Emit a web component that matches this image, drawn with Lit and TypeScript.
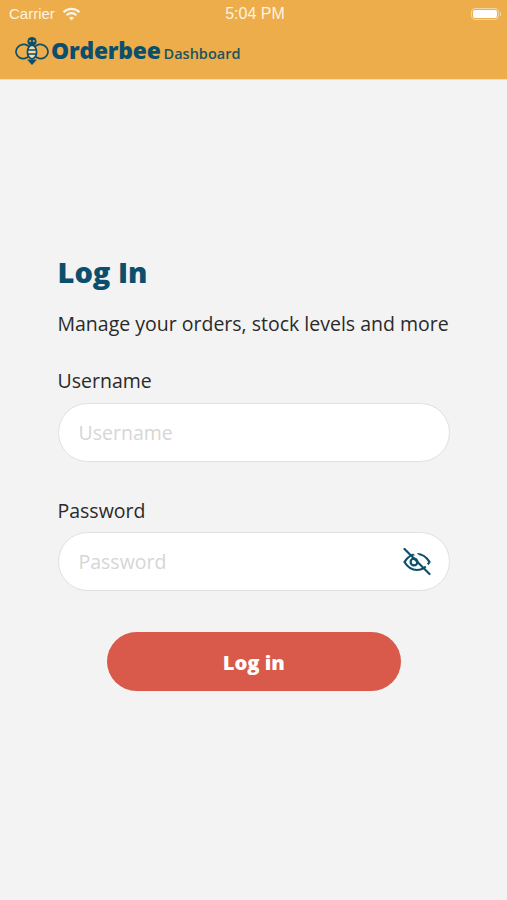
import { LitElement, html, css } from "lit";
import { customElement } from "lit/decorators.js";

@customElement("app-root")
export class AppRoot extends LitElement {
  static styles = css`
    :host {
      display: block;
      height: 900px;
      background: #f3f3f3;
      font-family: "Open Sans", sans-serif;
      color: #2a2a2a;
      overflow: hidden;
    }

    .header {
      background: #edad4b;
      height: 80px;
      box-sizing: border-box;
      border-bottom: 1px solid #eedfc4;
    }

    .status {
      height: 27px;
      display: grid;
      grid-template-columns: 1fr auto 1fr;
      align-items: center;
      padding: 0 6px 0 9px;
      color: #fdf3e0;
      font-family: "Liberation Sans", Arial, sans-serif;
      font-size: 15px;
    }
    .status-left {
      display: flex;
      align-items: center;
      gap: 7px;
    }
    .time {
      font-size: 16px;
    }
    .battery {
      justify-self: end;
      display: flex;
      align-items: center;
      gap: 1px;
    }
    .battery-body {
      width: 28px;
      height: 12px;
      box-sizing: border-box;
      border: 1px solid #f6d6a0;
      border-radius: 4px;
      padding: 1px;
    }
    .battery-fill {
      height: 100%;
      background: #fff;
      border-radius: 2px;
    }
    .battery-tip {
      width: 1px;
      height: 4px;
      background: #f6d6a0;
    }

    .brand {
      display: flex;
      align-items: center;
      padding: 8px 0 0 15px;
      color: #0b4f6c;
    }
    .brand svg {
      display: block;
      margin-right: 2px;
    }
    .brand-name {
      font-size: 22.8px;
      font-weight: 800;
      line-height: 30px;
      letter-spacing: -0.2px;
      padding-top: 1px;
    }
    .brand-sub {
      font-size: 14.5px;
      font-weight: 600;
      line-height: 20px;
      margin: 7px 0 0 3px;
      color: #1a5560;
    }

    .form {
      padding: 170px 57px 0 57.5px;
      display: flex;
      flex-direction: column;
    }
    h1 {
      margin: 0;
      font-size: 29px;
      line-height: 44px;
      font-weight: 800;
      color: #0b4f6c;
    }
    .lead {
      margin: 16px 0 0;
      font-size: 19.5px;
      line-height: 28px;
    }
    .label {
      display: block;
      margin-top: 29px;
      font-size: 19.5px;
      line-height: 28px;
    }
    .label.second {
      margin-top: 35px;
      line-height: 27px;
    }
    .field {
      margin-top: 8px;
      height: 59px;
      box-sizing: border-box;
      background: #fff;
      border: 1px solid #e0e0e0;
      border-radius: 30px;
      display: flex;
      align-items: center;
      padding: 0 18px 0 20px;
    }
    .field input {
      flex: 1;
      min-width: 0;
      border: 0;
      outline: 0;
      background: transparent;
      padding: 0;
      font: inherit;
      font-size: 19.5px;
      color: #222;
    }
    .field input::placeholder {
      color: #d6d6d6;
      opacity: 1;
    }
    .button {
      align-self: center;
      margin-top: 41px;
      width: 294px;
      height: 59px;
      border: 0;
      border-radius: 30px;
      background: #d9594a;
      color: #fff;
      font: inherit;
      font-size: 20.2px;
      font-weight: 800;
    }
  `;

  render() {
    return html`
      <div class="header">
        <div class="status">
          <div class="status-left">
            <span>Carrier</span>
            <svg width="19" height="14" viewBox="0 0 19 14" fill="none">
              <path d="M1.5 5.2a11.4 11.4 0 0 1 16 0" stroke="#fdf3e0" stroke-width="2.2" />
              <path d="M4.6 8.2a7 7 0 0 1 9.8 0" stroke="#fdf3e0" stroke-width="2.2" />
              <path d="M7 10.8a3.4 3.4 0 0 1 5 0L9.5 13.4z" fill="#fdf3e0" />
            </svg>
          </div>
          <span class="time">5:04 PM</span>
          <div class="battery">
            <div class="battery-body"><div class="battery-fill"></div></div>
            <div class="battery-tip"></div>
          </div>
        </div>
        <div class="brand">
          <svg width="34" height="28" viewBox="0 0 34 28" fill="none" stroke="#0b4f6c" stroke-width="1.7">
            <ellipse cx="8.5" cy="14.5" rx="7.5" ry="7" transform="rotate(-12 8.5 14.5)" />
            <ellipse cx="25.5" cy="14.5" rx="7.5" ry="7" transform="rotate(12 25.5 14.5)" />
            <ellipse cx="17" cy="15" rx="4.6" ry="6.8" fill="#f6d9a4" />
            <path d="M12.6 13h8.8M12.6 17h8.8" />
            <circle cx="17" cy="4.6" r="4.6" fill="#0b4f6c" stroke="none" />
            <circle cx="15.2" cy="4" r="1" fill="#edad4b" stroke="none" />
            <circle cx="18.8" cy="4" r="1" fill="#edad4b" stroke="none" />
            <path d="M12 22.5h10l-5 5.5z" fill="#0b4f6c" stroke="none" />
          </svg>
          <span class="brand-name">Orderbee</span>
          <span class="brand-sub">Dashboard</span>
        </div>
      </div>
      <div class="form">
        <h1>Log In</h1>
        <p class="lead">Manage your orders, stock levels and more</p>
        <label class="label">Username</label>
        <div class="field"><input placeholder="Username" /></div>
        <label class="label second">Password</label>
        <div class="field">
          <input placeholder="Password" type="password" />
          <svg width="28" height="28" viewBox="0 0 28 28" fill="none" stroke="#0b4f6c" stroke-width="2.2" stroke-linecap="round">
            <path d="M1.5 14c3-5 7-8 12.5-8s9.5 3 12.5 8c-3 5-7 8-12.5 8s-9.5-3-12.5-8z" />
            <circle cx="11" cy="14" r="3.4" />
            <path d="M4 0.5l24 25" stroke="#fff" stroke-width="3" transform="translate(2 -1.5)" />
            <path d="M1.5 1l25 25" />
          </svg>
        </div>
        <button class="button">Log in</button>
      </div>
    `;
  }
}
